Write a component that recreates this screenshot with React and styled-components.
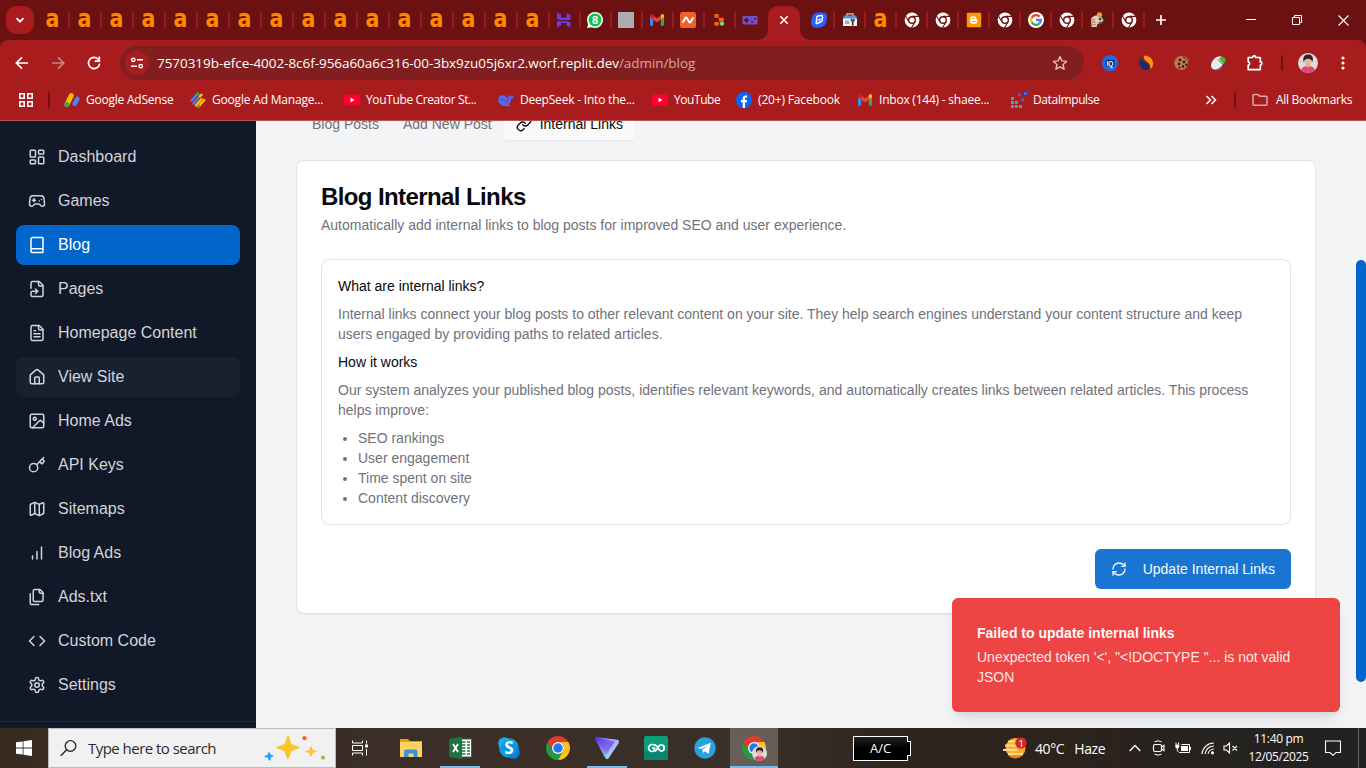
import React from "react";
import styled, { createGlobalStyle, css } from "styled-components";
import { Gamepad2, Book, House, Image as ImageIcon, Key, Map as MapIcon, Code, Link, RefreshCw } from "lucide-react";

const GlobalStyle = createGlobalStyle`
  *, *::before, *::after { box-sizing: border-box; }
  body { margin: 0; overflow: hidden; font-family: "Liberation Sans", Arial, sans-serif; }
  h1, h2, p, ul { margin: 0; }
  svg { display: block; flex: none; }
`;

const color = {
  frame: "#6b1112",
  toolbar: "#a81c1e",
  omnibox: "#821e1f",
  blue: "#0066cc",
  muted: "#71717a",
};
const uiFont = `"Open Sans", "Noto Sans", sans-serif`;

const Screen = styled.div`
  position: relative;
  width: 1366px;
  height: 768px;
  display: flex;
  flex-direction: column;
  overflow: hidden;
`;

/* ---------- browser frame ---------- */
const TabStrip = styled.div`
  height: 40px;
  flex: none;
  display: flex;
  align-items: center;
  background: ${color.frame};
  padding-left: 6px;
`;
const TabSearch = styled.div`
  width: 28px;
  height: 28px;
  margin-right: 4px;
  border-radius: 10px;
  background: ${color.toolbar};
  display: grid;
  place-items: center;
`;
const Tab = styled.div`
  flex: none;
  width: ${(p) => p.$w}px;
  height: 16px;
  padding-right: ${(p) => p.$pr || 0}px;
  border-right: 2px solid ${(p) => (p.$last ? "transparent" : "#9a1b1d")};
  display: flex;
  align-items: center;
  justify-content: center;
`;
const LetterA = styled.span`
  font: bold 25px/16px "DejaVu Sans Condensed", "DejaVu Sans", sans-serif;
  font-stretch: condensed;
  color: #ff8a00;
  transform: translateY(-1px) scaleX(0.92);
`;
const ActiveTab = styled.div`
  position: relative;
  flex: none;
  align-self: flex-end;
  width: 32px;
  height: 34px;
  margin: 0 4px 0 1px;
  border-radius: 10px 10px 0 0;
  background: ${color.toolbar};
  display: grid;
  place-items: center;
  padding-bottom: 6px;
  &::before, &::after {
    content: "";
    position: absolute;
    bottom: 0;
    width: 10px;
    height: 10px;
  }
  &::before { left: -10px; background: radial-gradient(circle at 0 0, transparent 9.5px, ${color.toolbar} 10px); }
  &::after { right: -10px; background: radial-gradient(circle at 100% 0, transparent 9.5px, ${color.toolbar} 10px); }
`;
const NewTab = styled.div`
  width: 32px;
  display: grid;
  place-items: center;
`;
const WindowControls = styled.div`
  margin-left: auto;
  display: flex;
`;
const WindowButton = styled.div`
  width: 46px;
  height: 40px;
  display: grid;
  place-items: center;
`;
const ToolbarArea = styled.div`
  flex: none;
  height: 81px;
  background: linear-gradient(${color.toolbar}, ${color.toolbar}) 0 8px / 100% 100% no-repeat, ${color.frame};
  border-bottom: 1px solid #bf5254;
`;
const ToolbarFill = styled.div`
  height: 80px;
  border-radius: 8px 8px 0 0;
  background: ${color.toolbar};
`;
const AddressRow = styled.div`
  height: 46px;
  display: flex;
  align-items: center;
  padding-left: 4px;
`;
const NavButton = styled.div`
  width: 36px;
  height: 34px;
  display: grid;
  place-items: center;
  opacity: ${(p) => (p.$off ? 0.45 : 1)};
`;
const Omnibox = styled.div`
  width: 964px;
  height: 34px;
  margin-left: 8px;
  padding: 0 16px 0 5px;
  border-radius: 17px;
  background: ${color.omnibox};
  display: flex;
  align-items: center;
`;
const SiteInfo = styled.div`
  width: 24px;
  height: 24px;
  border-radius: 50%;
  background: ${color.toolbar};
  display: grid;
  place-items: center;
  margin-right: 8px;
`;
const Url = styled.div`
  flex: 1;
  white-space: nowrap;
  font: 13.5px/20px ${uiFont};
  letter-spacing: -0.05px;
  color: #fff;
  span { color: #d8a5a5; }
`;
const ExtRow = styled.div`
  display: flex;
  align-items: center;
  margin-left: 8px;
`;
const Ext = styled.div`
  width: ${(p) => p.$w || 36}px;
  height: 32px;
  display: grid;
  place-items: center;
`;
const Divider = styled.div`
  width: 2px;
  height: 16px;
  border-radius: 1px;
  background: #6f1214;
  flex: none;
  margin: ${(p) => p.$m || "0"};
`;
const BookmarkRow = styled.div`
  height: 28px;
  display: flex;
  align-items: center;
  padding-left: 19px;
`;
const Bookmark = styled.div`
  flex: none;
  width: ${(p) => p.$w}px;
  display: flex;
  align-items: center;
  gap: ${(p) => p.$gap || 6}px;
  font: 12px/16px ${uiFont};
  letter-spacing: ${(p) => p.$ls || -0.3}px;
  white-space: nowrap;
  color: #fff;
`;
const Overflow = styled.div`
  margin-left: auto;
  margin-right: 17px;
`;

/* ---------- admin page ---------- */
const Viewport = styled.div`
  height: 607px;
  flex: none;
  display: flex;
  overflow: hidden;
  background: #f3f4f6;
`;
const Sidebar = styled.nav`
  width: 256px;
  flex: none;
  background: #111827;
  display: flex;
  flex-direction: column;
`;
const NavList = styled.div`
  display: flex;
  flex-direction: column;
  gap: 4px;
  padding: 16px;
  border-bottom: 1px solid #1f2937;
`;
const NavItem = styled.div`
  height: 40px;
  display: flex;
  align-items: center;
  gap: 12px;
  padding: 0 12px;
  border-radius: 8px;
  font-size: 16px;
  line-height: 24px;
  color: #d1d5db;
  ${(p) => p.$state === "active" && css`background: ${color.blue}; color: #fff;`}
  ${(p) => p.$state === "hover" && css`background: #18212f;`}
`;
const Main = styled.main`
  flex: 1;
  padding: 0 40px;
  display: flex;
  flex-direction: column;
`;
const TabList = styled.div`
  display: flex;
  align-self: flex-start;
  flex: none;
  height: 40px;
  margin-top: -17px;
  padding: 4px;
  border-radius: 6px;
  background: #f3f4f5;
`;
const TabTrigger = styled.div`
  display: flex;
  align-items: center;
  gap: 8px;
  padding: 0 12px;
  font-size: 14px;
  line-height: 20px;
  white-space: nowrap;
  border-radius: 4px;
  color: ${color.muted};
  ${(p) => p.$active && css`
    color: #0c0a09;
    background: #fafafa;
    box-shadow: 0 1px 2px rgba(0, 0, 0, 0.06);
  `}
`;
const Card = styled.section`
  flex: none;
  margin-top: 16px;
  height: 454px;
  padding: 24px;
  border: 1px solid #e4e4e7;
  border-radius: 8px;
  background: #fff;
  box-shadow: 0 1px 2px rgba(0, 0, 0, 0.05);
  display: flex;
  flex-direction: column;
`;
const Title = styled.h1`
  font-size: 24px;
  line-height: 24px;
  font-weight: bold;
  letter-spacing: -0.6px;
  color: #09090b;
`;
const Subtitle = styled.p`
  margin-top: 6px;
  font-size: 14px;
  line-height: 20px;
  color: ${color.muted};
`;
const InfoBox = styled.div`
  margin-top: 24px;
  padding: 16px;
  border: 1px solid #e4e4e7;
  border-radius: 8px;
  display: flex;
  flex-direction: column;
  gap: 8px;
  font-size: 14px;
  line-height: 20px;
  color: ${color.muted};
`;
const InfoHeading = styled.h2`
  font-size: 14px;
  line-height: 20px;
  font-weight: 400;
  color: #09090b;
`;
const Bullets = styled.ul`
  padding-left: 20px;
`;
const UpdateButton = styled.div`
  align-self: flex-end;
  flex: none;
  margin-top: 24px;
  width: 196px;
  height: 40px;
  padding: 0 16px;
  display: flex;
  align-items: center;
  justify-content: space-between;
  border-radius: 6px;
  background: #1a75d2;
  color: #f8fafc;
  font-size: 14px;
  white-space: nowrap;
`;
const ScrollGutter = styled.div`
  width: 10px;
  flex: none;
  padding-top: 139px;
`;
const ScrollThumb = styled.div`
  height: 422px;
  border-radius: 5px;
  background: ${color.blue};
`;
const Toast = styled.div`
  position: absolute;
  right: 26px;
  top: 598px;
  width: 388px;
  height: 114px;
  padding: 25px;
  border-radius: 6px;
  background: #ef4444;
  color: #fafafa;
  font-size: 14px;
  line-height: 20px;
  box-shadow: 0 10px 15px -3px rgba(0, 0, 0, 0.1), 0 4px 6px -4px rgba(0, 0, 0, 0.1);
`;
const ToastTitle = styled.div`
  font-weight: bold;
  margin-bottom: 4px;
`;
const ToastText = styled.div`
  opacity: 0.9;
`;

/* ---------- taskbar ---------- */
const Taskbar = styled.footer`
  position: relative;
  height: 40px;
  flex: none;
  display: flex;
  align-items: center;
  background: linear-gradient(90deg, #382b22 0, #3a2e26 30%, #3b3028 55%, #30251e 66%, #2c231d 78%, #242220 92%, #232221 100%);
  font-family: ${uiFont};
  color: #fff;
`;
const TaskCell = styled.div`
  position: relative;
  flex: none;
  width: 48px;
  height: 40px;
  display: grid;
  place-items: center;
  margin-right: ${(p) => p.$mr || 0}px;
  background: ${(p) => (p.$active ? "#675e58" : "transparent")};
  &::after {
    content: "";
    display: ${(p) => (p.$open ? "block" : "none")};
    position: absolute;
    bottom: 0;
    left: ${(p) => (p.$active ? 0 : 4)}px;
    right: ${(p) => (p.$active ? 0 : 4)}px;
    height: 2px;
    background: #76b9ed;
  }
`;
const SearchBox = styled.div`
  width: 288px;
  height: 40px;
  flex: none;
  border: 1px solid #bdbbb9;
  background: #f2f1f1;
  display: flex;
  align-items: center;
  padding: 0 9px 0 11px;
  font-size: 15px;
  color: #2b2b2b;
  span { flex: 1; margin-left: 11px; letter-spacing: -0.53px; white-space: nowrap; }
`;
const BatteryBadge = styled.div`
  position: relative;
  width: 55px;
  height: 25px;
  margin-left: 75px;
  border: 1px solid #fff;
  background: linear-gradient(#222, #000 50%);
  font: 13px/23px ${uiFont};
  text-align: center;
  &::after {
    content: "";
    position: absolute;
    right: -4px;
    top: 4px;
    width: 4px;
    height: 15px;
    border: 1px solid #fff;
    border-left: 0;
    background: #000;
  }
`;
const Tray = styled.div`
  margin-left: auto;
  display: flex;
  align-items: center;
`;
const Weather = styled.div`
  width: 120px;
  display: flex;
  align-items: center;
  font-size: 14px;
  letter-spacing: -0.4px;
  white-space: nowrap;
`;
const WeatherText = styled.span`
  margin-left: ${(p) => p.$ml}px;
`;
const TrayCell = styled.div`
  width: ${(p) => p.$w}px;
  height: 40px;
  display: grid;
  place-items: center;
`;
const Clock = styled.div`
  width: 71px;
  text-align: center;
  font-size: 12px;
  line-height: 18px;
  letter-spacing: -0.35px;
  white-space: nowrap;
`;
const ShowDesktop = styled.div`
  width: 8px;
  height: 40px;
  margin-left: 6px;
  border-left: 1px solid #6a6866;
`;

/* ---------- drawings ---------- */
const Svg = ({ s = 16, vb = "0 0 16 16", w, h, children, ...rest }) => (
  <svg width={w || s} height={h || s} viewBox={vb} fill="none" {...rest}>{children}</svg>
);
const Line = ({ s = 18, children }) => (
  <Svg s={s} vb="0 0 24 24" stroke="currentColor" strokeWidth="2" strokeLinecap="round" strokeLinejoin="round">{children}</Svg>
);
const DashboardIcon = () => (
  <Line><rect x="3" y="3" width="7" height="9" rx="1" /><rect x="14" y="3" width="7" height="5" rx="1" /><rect x="14" y="12" width="7" height="9" rx="1" /><rect x="3" y="16" width="7" height="5" rx="1" /></Line>
);
const FileArrow = () => (
  <Line><path d="m10 18 3-3-3-3" /><path d="M14 2v4a2 2 0 0 0 2 2h4" /><path d="M4 11V4a2 2 0 0 1 2-2h9l5 5v13a2 2 0 0 1-2 2H6a2 2 0 0 1-2-2v-3a2 2 0 0 1 2-2h7" /></Line>
);
const FileText = () => (
  <Line><path d="M15 2H6a2 2 0 0 0-2 2v16a2 2 0 0 0 2 2h12a2 2 0 0 0 2-2V7Z" /><path d="M14 2v4a2 2 0 0 0 2 2h4M10 9H8M16 13H8M16 17H8" /></Line>
);
const Bars = () => (<Line><path d="M12 20V10M18 20V4M6 20v-4" /></Line>);
const FilesIcon = () => (
  <Line><path d="M20 7h-3a2 2 0 0 1-2-2V2" /><path d="M9 18a2 2 0 0 1-2-2V4a2 2 0 0 1 2-2h7l4 4v10a2 2 0 0 1-2 2Z" /><path d="M3 7.6v12.8A1.6 1.6 0 0 0 4.6 22h9.8" /></Line>
);
const Gear = () => (
  <Line><path d="M12.22 2h-.44a2 2 0 0 0-2 2v.18a2 2 0 0 1-1 1.73l-.43.25a2 2 0 0 1-2 0l-.15-.08a2 2 0 0 0-2.73.73l-.22.38a2 2 0 0 0 .73 2.73l.15.1a2 2 0 0 1 1 1.72v.51a2 2 0 0 1-1 1.74l-.15.09a2 2 0 0 0-.73 2.73l.22.38a2 2 0 0 0 2.73.73l.15-.08a2 2 0 0 1 2 0l.43.25a2 2 0 0 1 1 1.73V20a2 2 0 0 0 2 2h.44a2 2 0 0 0 2-2v-.18a2 2 0 0 1 1-1.73l.43-.25a2 2 0 0 1 2 0l.15.08a2 2 0 0 0 2.73-.73l.22-.39a2 2 0 0 0-.73-2.73l-.15-.08a2 2 0 0 1-1-1.74v-.5a2 2 0 0 1 1-1.74l.15-.09a2 2 0 0 0 .73-2.73l-.22-.38a2 2 0 0 0-2.73-.73l-.15.08a2 2 0 0 1-2 0l-.43-.25a2 2 0 0 1-1-1.73V4a2 2 0 0 0-2-2z" /><circle cx="12" cy="12" r="3" /></Line>
);

const Hostinger = () => (
  <Svg><path d="M1 .5 5 2.400V5.600h5.500V1l4 2v5H3.800L1 6.800zM1 15.500V9.200l11 .1 2.500 1.300v4.900l-4-2v-2.400H5v2.400z" fill="#673de6" /></Svg>
);
const WhatsApp = () => (
  <Svg><circle cx="8" cy="8" r="8" fill="#fff" /><path d="M0 16 1.500 11 6 15z" fill="#fff" /><circle cx="8" cy="7.900" r="6.500" fill="#12c04c" /><text x="8" y="11.700" textAnchor="middle" fontFamily="Liberation Sans, sans-serif" fontWeight="bold" fontSize="11" fill="#fff">8</text></Svg>
);
const GraySquare = () => (<Svg><rect width="16" height="16" fill="#adadad" /></Svg>);
const Gmail = () => (
  <Svg><path d="M1 4v8.800c0 .6.400 1 1 1h2.200V6.900z" fill="#4285f4" /><path d="M11.800 6.900v6.900H14c.6 0 1-.4 1-1V4z" fill="#34a853" /><path d="M11.800 3.600v4L15 5.200V3.800c0-1.500-1.700-2.200-2.700-1.400z" fill="#fbbc04" /><path d="M4.200 7.600v-4L8 6.400l3.800-2.800v4L8 10.500z" fill="#ea4335" /><path d="M1 3.800v1.400l3.200 2.400v-4l-.5-1.200C2.700 1.600 1 2.300 1 3.800z" fill="#c5221f" /></Svg>
);
const Namecheap = () => (
  <Svg><rect width="16" height="16" rx="2.500" fill="#f0622a" /><path d="M3 10 5.200 6.200Q6 5 6.900 6.200L9.100 9.800Q10 11 10.800 9.800L13 6" stroke="#fff" strokeWidth="2" strokeLinecap="round" /></Svg>
);
const Replit = () => (
  <Svg><path d="M3.300 2h4.500v3.800H3.300zM7.800 5.800h5v3.600h-5zM3.300 10h4.500v3.700H3.300z" fill="#f26207" /><circle cx="11" cy="11.600" r="2.200" fill="#6fdc8c" /></Svg>
);
const PadIcon = () => (
  <Svg><rect x="0.500" y="4" width="15" height="8.500" rx="1" fill="#7c4bc4" /><path d="M4.500 5.700v5M2 8.200h5M9.300 9.700h1.800M12 6.800h1.800" stroke="#2e1440" strokeWidth="1.500" /></Svg>
);
const BlueLogo = () => (
  <Svg><path d="M4.500.9Q10-.5 13.800.8 16.300 1.500 16 5.500 15.700 10.500 13.800 13.300 10.500 16.300 5 15.800 1 15.600.3 12.500-.5 7 1.700 3.500 2.800 1.400 4.500.9z" fill="#2860ff" /><path d="M6 4.800q.2-.7 1-.8l3.600-.4q1-.1.900.9l-.5 4.200q-.1.800-.9 1l-4 1.800q-1 .4-1-.7z" stroke="#fff" strokeWidth="1.500" /><path d="m7.500 6.900 2.300-.4-.4 2-2.200.7z" fill="#fff" /></Svg>
);
const Toolbox = () => (
  <Svg><path d="M5 4V1.800h6V4" stroke="#c9ccd0" strokeWidth="1.200" /><rect x="1.500" y="3.500" width="13" height="4" rx="1" fill="#5b93d6" /><rect x="1" y="6.500" width="14" height="7.500" fill="#f2f3f4" /><rect x="3" y="8.500" width="4.500" height="3.500" fill="#a9b0b8" /><path d="M10.700 9v4.500M9 7l1.700 2.500L12.500 7" stroke="#30343a" strokeWidth="1.700" /></Svg>
);
const ChromeMono = () => (
  <Svg><circle cx="8" cy="8" r="7.400" fill="#fff" /><circle cx="8" cy="8" r="4" fill={color.frame} /><circle cx="8" cy="8" r="2.600" fill="#fff" /><path d="M8 4.400h7M4.900 9.800 1.300 3.700M11.100 9.800 7.500 15.800" stroke={color.frame} strokeWidth="1.100" /></Svg>
);
const Blogger = () => (
  <Svg><rect x=".8" y=".8" width="14.400" height="14.400" rx="1" fill="#ff9800" /><path d="M6.200 4.200h2a2 2 0 0 1 2 2v.4c0 .5.300.8.700.8.400 0 .6.300.6.600v1.700a2 2 0 0 1-2 2H6.200a2 2 0 0 1-2-2V6.200a2 2 0 0 1 2-2z" fill="#fff" /><path d="M6.300 6.500h1.800M6.300 9.500h3" stroke="#ff9800" strokeWidth="1.100" strokeLinecap="round" /></Svg>
);
const GoogleG = () => (
  <Svg><circle cx="8" cy="8" r="8" fill="#fff" /><g strokeWidth="2.300"><path d="M11.600 4.600A4.900 4.900 0 0 0 3.700 5.700" stroke="#ea4335" /><path d="M3.700 5.700a4.900 4.900 0 0 0 0 4.600" stroke="#fbbc05" /><path d="M3.700 10.300a4.900 4.900 0 0 0 7.700 1.200" stroke="#34a853" /><path d="M8 8h4.900a4.900 4.900 0 0 1-1.500 3.500" stroke="#4285f4" /></g></Svg>
);
const Critter = () => (
  <Svg><path d="M1 7C3 2.500 9 2.500 12.500 4.500l2.500 3-4 3.500-3.500 1-1 3H1.500z" fill="#d8d3cc" /><path d="M1.500 7.500h3.500M1.500 10h4M2 12.500h4" stroke="#d8912b" strokeWidth="1.400" /><circle cx="9.500" cy="2.800" r="2.600" fill="#f59a35" /><path d="M11 4.500c3-1.500 5.500.5 4 4.500l-1.500.5-.5-2.500z" fill="#23272b" /><circle cx="10" cy="7" r="1.300" fill="#3d2c28" /><path d="m8.500 11 3-1.500" stroke="#6b4a3a" strokeWidth="1.200" /><circle cx="12.600" cy="7.800" r="1" fill="#7ba65a" /></Svg>
);

const AdSense = () => (
  <Svg><path d="M3 12.500 7.300 3.500" stroke="#fbbc04" strokeWidth="5" strokeLinecap="round" /><path d="M10.800 11.800 13.300 7" stroke="#4285f4" strokeWidth="4.600" strokeLinecap="round" /><circle cx="2.800" cy="12.500" r="2.500" fill="#34a853" /></Svg>
);
const AdManager = () => (
  <Svg><g strokeWidth="2.500" strokeLinecap="round"><path d="M1.700 8.500 7.500 2" stroke="#4285f4" /><path d="M3.500 11.500 8 6.500" stroke="#4285f4" /><path d="m6 13.500 5.500-6.500" stroke="#fbbc04" /><path d="m8.500 14.500 5.700-6.300" stroke="#fbbc04" /><path d="M9.500 4.500 11.500 2.800" stroke="#fbbc04" /><path d="m7.500 2 .5-.5M8.300 14.600l.5-.5" stroke="#34a853" /></g></Svg>
);
const YouTube = () => (
  <Svg><rect y="2.500" width="16" height="11" rx="2.500" fill="#ff0033" /><path d="M6.500 5.700v4.600L10.500 8z" fill="#fff" /></Svg>
);
const DeepSeek = () => (
  <Svg><path d="M.2 7.500C.5 3.500 4.500 2.300 7 4c1.500 1 3 2.700 3.700 2.500-.8-1.300-.6-2.900.2-3.900.4 1.400 1.400 2 2.300 1.800.9-.1 1.500-.7 2.600-.9-.2 2.200-1.500 3.700-3 4 0 2.200-1 4-2.200 5l2 1.400c-1.500.7-3.200.6-4.200 0-4 .7-8.100-1.800-8.200-6.400z" fill="#4d6bfe" /><path d="M3.200 7.300c2-.5 4.700 2.200 6.300 4.500M8.700 7.600c.9.100 1.500.7 1.700 1.400" stroke={color.toolbar} strokeWidth=".9" /></Svg>
);
const Facebook = () => (
  <Svg><circle cx="8" cy="8" r="8" fill="#0866ff" /><path d="M6.700 15.800V10.300H5V8h1.700V6.700c0-2.300 1.100-3.300 3.100-3.300.6 0 1 .1 1.300.2v2c-2-.3-2 .3-2 1.500V8h2l-.4 2.300H9.100v5.600z" fill="#fff" /></Svg>
);
const DataImpulse = () => (
  <Svg><g fill="#35a9c4"><path d="M0 5h3v3H0zM0 9h3v3H0zM4 9h3v3H4zM0 13h3v3H0zM4 13h3v3H4zM8 13h3v3H8z" /></g><g fill="#4a63e0"><path d="m8.500 1 2 2-2 2-2-2zM11.500 6l2 2-2 2-2-2z" /><path d="M13 0h3v3h-3z" /></g></Svg>
);

const ChromeColor = ({ s = 24 }) => (
  <Svg s={s} vb="0 0 48 48"><path d="M24 12h20.780A24 24 0 0 0 3.220 12L13.610 30A12 12 0 0 1 24 12z" fill="#e33b2e" /><path d="M34.390 30 24 48A24 24 0 0 1 3.220 12L13.610 30A12 12 0 0 0 34.390 30z" fill="#249a41" /><path d="M24 48A24 24 0 0 0 44.780 12H24A12 12 0 0 1 34.390 30z" fill="#fcc31e" /><circle cx="24" cy="24" r="12" fill="#fff" /><circle cx="24" cy="24" r="9.500" fill="#2a78ea" /></Svg>
);
const Portrait = ({ s = 20 }) => (
  <Svg s={s} vb="0 0 20 20"><circle cx="10" cy="10" r="10" fill="#dedbd8" /><path d="M3.200 17.300C3.800 14 7 13 10 13s6.200 1 6.800 4.300A10 10 0 0 1 3.200 17.300z" fill="#e0457b" /><path d="M8 10h4v3.500l-2 1.200-2-1.200z" fill="#d9a58d" /><ellipse cx="10" cy="8.300" rx="3.500" ry="4.300" fill="#e6b8a2" /><path d="M5.800 9.500C4.300 4 6.500 1.500 10.200 1.500s5.900 2.500 4 8C13.800 7 12.800 5.800 10 5.800S6.300 7 5.800 9.500z" fill="#33211d" /></Svg>
);

const tabsLeft = [Hostinger, WhatsApp, GraySquare, Gmail, Namecheap, Replit, PadIcon];
const Letter = () => <LetterA>a</LetterA>;
const tabsRight = [BlueLogo, Toolbox, Letter, ChromeMono, ChromeMono, Blogger, ChromeMono, GoogleG, ChromeMono, Critter, ChromeMono];

const bookmarks = [
  { icon: AdSense, label: "Google AdSense", w: 126, ls: -0.23 },
  { icon: AdManager, label: "Google Ad Manage...", w: 154, ls: -0.19 },
  { icon: YouTube, label: "YouTube Creator St...", w: 154, ls: -0.37 },
  { icon: DeepSeek, label: "DeepSeek - Into the...", w: 154, ls: -0.2 },
  { icon: YouTube, label: "YouTube", w: 84, ls: -0.44 },
  { icon: Facebook, label: "(20+) Facebook", w: 121, ls: -0.16 },
  { icon: Gmail, label: "Inbox (144) - shaee...", w: 154, ls: -0.22 },
  { icon: DataImpulse, label: "DataImpulse", w: 100, ls: -0.42 },
];

const navItems = [
  [DashboardIcon, "Dashboard"],
  [Gamepad2, "Games"],
  [Book, "Blog", "active"],
  [FileArrow, "Pages"],
  [FileText, "Homepage Content"],
  [House, "View Site", "hover"],
  [ImageIcon, "Home Ads"],
  [Key, "API Keys"],
  [MapIcon, "Sitemaps"],
  [Bars, "Blog Ads"],
  [FilesIcon, "Ads.txt"],
  [Code, "Custom Code"],
  [Gear, "Settings"],
];

function BrowserFrame() {
  return (
    <>
      <TabStrip>
        <TabSearch><Svg s={10} vb="0 0 10 10"><path d="m1.500 3.200 3.500 3.500 3.500-3.500" stroke="#fff" strokeWidth="1.800" /></Svg></TabSearch>
        {Array.from({ length: 16 }, (_, i) => <Tab key={i} $w={32}><LetterA>a</LetterA></Tab>)}
        {tabsLeft.map((Icon, i) => <Tab key={i} $w={31} $pr={1} $last={i === 6}><Icon /></Tab>)}
        <ActiveTab><Svg s={10} vb="0 0 10 10"><path d="m1.300 1.300 7.400 7.400M8.700 1.300 1.300 8.700" stroke="#fff" strokeWidth="1.600" /></Svg></ActiveTab>
        {tabsRight.map((Icon, i) => <Tab key={i} $w={31}><Icon /></Tab>)}
        <NewTab><Svg s={12} vb="0 0 12 12"><path d="M6 1v10M1 6h10" stroke="#fff" strokeWidth="1.700" /></Svg></NewTab>
        <WindowControls>
          <WindowButton><Svg s={10} vb="0 0 10 10"><path d="M0 4.500h10" stroke="#fff" /></Svg></WindowButton>
          <WindowButton><Svg s={10} vb="0 0 10 10"><path d="M.5 2.500h7v7h-7zM2.500 2.500v-2h7v7h-2" stroke="#fff" /></Svg></WindowButton>
          <WindowButton><Svg s={11} vb="0 0 11 11"><path d="m.5.5 10 10M10.500.5l-10 10" stroke="#fff" strokeWidth="1.100" /></Svg></WindowButton>
        </WindowControls>
      </TabStrip>
      <ToolbarArea>
        <ToolbarFill>
          <AddressRow>
            <NavButton><Svg><path d="M14 8H2.500M8 2.300 2.300 8 8 13.700" stroke="#fff" strokeWidth="1.700" /></Svg></NavButton>
            <NavButton $off><Svg><path d="M2 8h11.500M8 2.300 13.700 8 8 13.700" stroke="#fff" strokeWidth="1.700" /></Svg></NavButton>
            <NavButton><Svg><path d="M12.600 4.700A5.600 5.600 0 1 0 13.600 8.600" stroke="#fff" strokeWidth="1.700" /><path d="M13.300 1.500v4.600H8.700" stroke="#fff" strokeWidth="1.700" /></Svg></NavButton>
            <Omnibox>
              <SiteInfo><Svg s={14} vb="0 0 14 14" stroke="#fff" strokeWidth="1.400"><circle cx="3.300" cy="3.800" r="1.700" /><path d="M7 3.800h6M1 10.200h6" /><circle cx="10.700" cy="10.200" r="1.700" /></Svg></SiteInfo>
              <Url>7570319b-efce-4002-8c6f-956a60a6c316-00-3bx9zu05j6xr2.worf.replit.dev<span>/admin/blog</span></Url>
              <Svg><path d="m8 1.600 1.900 4.300 4.700.5-3.500 3.100 1 4.700L8 11.800l-4.100 2.400 1-4.700L1.400 6.400l4.700-.5z" stroke="#e3bcbc" strokeWidth="1.400" strokeLinejoin="round" /></Svg>
            </Omnibox>
            <ExtRow>
              <Ext><Svg><circle cx="8" cy="8" r="8" fill="#1a6cf2" /><rect x="3.500" y="4.700" width="9" height="6.800" rx="1" fill="#0a2a6a" /><text x="8" y="10.500" textAnchor="middle" fontFamily="Liberation Sans, sans-serif" fontWeight="bold" fontSize="6.500" fill="#fff">IQ</text></Svg></Ext>
              <Ext><Svg><path d="M4.500 1.500C1 4 .2 9 3 12.500s7 3 8.500 1C12 10 9.500 8.500 7 7S4 3.500 4.500 1.500z" fill="#1f2f66" /><path d="M6 .8c4-.5 8 2 8.800 5.500s-.3 6.700-2.500 8c.6-4-1-6-3.300-7.500S5.300 3 6 .8z" fill="#ff9416" /></Svg></Ext>
              <Ext><Svg><path d="M8.500 1a2 2 0 0 0 1.800 2.500A2.500 2.500 0 0 0 13 5.500a7 7 0 1 1-4.500-4.500z" fill="#b9794c" transform="translate(.8 .3)" /><path d="M10 .8c3 .5 5 3 5.300 5.700L12 5z" fill="#9b6039" /><g fill="#2b1a14"><circle cx="6" cy="5" r="1.300" /><circle cx="10" cy="7" r="1.300" /><circle cx="5" cy="9" r="1.300" /><circle cx="9" cy="11.500" r="1.300" /><circle cx="12.500" cy="9.800" r="1.200" /><circle cx="5.500" cy="12.700" r="1" /></g></Svg></Ext>
              <Ext><Svg><ellipse cx="7.500" cy="8" rx="5.400" ry="7.600" transform="rotate(42 7.500 8)" fill="#e8ecee" /><path d="M3 14.500c4 .5 9-2 11-8l-2.500 6.500L7 15.500z" fill="#6f7d86" /><path d="M9 3.500C11 1 14 1 15 3.500s.2 4-1.500 5.500z" fill="#44b82e" /><path d="m8 4.500 5 5" stroke="#333" strokeWidth=".8" /></Svg></Ext>
              <Ext $w={38}><Svg s={18} vb="0 0 18 18"><path d="M2.200 3.500h4.300a1.600 1.600 0 0 1 3.200 0h4.600v4.400a1.600 1.600 0 0 1 0 3.200v4.500H2.200v-4.200a2 2 0 0 0 0-3.800z" stroke="#fff" strokeWidth="1.700" strokeLinejoin="round" /></Svg></Ext>
              <Divider $m="0 0 0 7px" />
              <Ext $w={50}><Portrait /></Ext>
              <Ext $w={20}><Svg s={16}><g fill="#fff"><circle cx="8" cy="3" r="1.600" /><circle cx="8" cy="8" r="1.600" /><circle cx="8" cy="13" r="1.600" /></g></Svg></Ext>
            </ExtRow>
          </AddressRow>
          <BookmarkRow>
            <Svg s={14} vb="0 0 14 14" stroke="#fff" strokeWidth="1.600"><path d="M.8.800h4.400v4.400H.8zM8.800.8h4.400v4.400H8.800zM.8 8.800h4.400v4.400H.8zM8.800 8.800h4.400v4.400H8.800z" /></Svg>
            <Divider $m="0 14px 0 15px" />
            {bookmarks.map(({ icon: Icon, label, w, ls }) => (
              <Bookmark key={label} $w={w} $ls={ls}><Icon />{label}</Bookmark>
            ))}
            <Overflow><Svg s={12} vb="0 0 12 12"><path d="m1.500 2 4 4-4 4M6.500 2l4 4-4 4" stroke="#fff" strokeWidth="1.500" /></Svg></Overflow>
            <Divider $m="0 16px 0 0" />
            <Bookmark $w={114} $gap={8}>
              <Svg><path d="M1 3.500c0-.5.400-1 1-1h4l1.700 1.800H14c.6 0 1 .4 1 1v7c0 .6-.4 1-1 1H2c-.6 0-1-.4-1-1z" stroke="#d8a9a9" strokeWidth="1.500" /></Svg>
              All Bookmarks
            </Bookmark>
          </BookmarkRow>
        </ToolbarFill>
      </ToolbarArea>
    </>
  );
}

function AdminPage() {
  return (
    <Viewport>
      <Sidebar>
        <NavList>
          {navItems.map(([Icon, label, state]) => (
            <NavItem key={label} $state={state}><Icon size={18} /><span>{label}</span></NavItem>
          ))}
        </NavList>
      </Sidebar>
      <Main>
        <TabList>
          <TabTrigger>Blog Posts</TabTrigger>
          <TabTrigger>Add New Post</TabTrigger>
          <TabTrigger $active><Link size={16} />Internal Links</TabTrigger>
        </TabList>
        <Card>
          <Title>Blog Internal Links</Title>
          <Subtitle>Automatically add internal links to blog posts for improved SEO and user experience.</Subtitle>
          <InfoBox>
            <InfoHeading>What are internal links?</InfoHeading>
            <p>Internal links connect your blog posts to other relevant content on your site. They help search engines understand your content structure and keep users engaged by providing paths to related articles.</p>
            <InfoHeading>How it works</InfoHeading>
            <p>Our system analyzes your published blog posts, identifies relevant keywords, and automatically creates links between related articles. This process helps improve:</p>
            <Bullets>
              <li>SEO rankings</li>
              <li>User engagement</li>
              <li>Time spent on site</li>
              <li>Content discovery</li>
            </Bullets>
          </InfoBox>
          <UpdateButton><RefreshCw size={16} />Update Internal Links</UpdateButton>
        </Card>
      </Main>
      <ScrollGutter><ScrollThumb /></ScrollGutter>
    </Viewport>
  );
}

function WindowsTaskbar() {
  return (
    <Taskbar>
      <TaskCell><Svg><path d="M0 2.300 6.700 1.400v6.200H0zM7.500 1.200 16 0v7.600H7.500zM0 8.400h6.700v6.200L0 13.700zM7.500 8.400H16V16l-8.500-1.200z" fill="#fff" /></Svg></TaskCell>
      <SearchBox>
        <Svg s={17} vb="0 0 17 17"><circle cx="10.500" cy="6" r="5.300" stroke="#222" strokeWidth="1.300" /><path d="M6.700 9.800.7 15.800" stroke="#222" strokeWidth="1.400" /></Svg>
        <span>Type here to search</span>
        <Svg w={62} h={26} vb="0 0 62 26">
          <path d="M24 .8c1.700 0 2 6.500 3.700 8.200S35.500 10.900 35.500 12.500s-6 2-7.800 3.700S25.700 24.300 24 24.300s-2-6.400-3.700-8.100-8-2.100-8-3.700 6.300-1.800 8-3.500S22.300.8 24 .8z" fill="#fcc42c" />
          <path d="M47 11c.8 0 1 3 1.800 3.800s4 .9 4 1.700-3.200 1-4 1.800S47.800 22 47 22s-1-2.900-1.800-3.700-4-1-4-1.800 3.200-.9 4-1.700S46.200 11 47 11z" fill="#fdc13c" />
          <path d="M5 17c.7 0 1 2 1.500 2.500s3 .3 3 1.300-2.500 1-2.700 1.700.4 3-1 3S4.300 23.200 3.700 22.700.5 22.800.5 21.500s2.300-1 2.800-1.500S4.300 17 5 17z" fill="#1ba5ef" />
          <circle cx="40.500" cy="3.200" r="2.100" fill="#ec6135" /><circle cx="59" cy="22.600" r="2.100" fill="#8cc63f" />
        </Svg>
      </SearchBox>
      <TaskCell $mr={3}><Svg><path d="M.5.500V3h10V.500M.5 15.500V13h10v2.500M.5 5.500h10v5H.5zM14.500.500v3M14.500 9v6.500" stroke="#fff" /><rect x="13" y="4.500" width="3" height="3" fill="#fff" /></Svg></TaskCell>
      <TaskCell $mr={1}><Svg s={24} vb="0 0 24 24"><path d="M1 3h8l2 2h12v4H1z" fill="#e3a008" /><path d="M1 6h22v15H1z" fill="#fdd45f" /><path d="M5 21v-5.500a2 2 0 0 1 2-2h9.500a2 2 0 0 1 2 2V21h-4v-3.500h-5V21z" fill="#3d92d8" /></Svg></TaskCell>
      <TaskCell $mr={1} $open><Svg s={24} vb="0 0 24 24"><rect x="11" y="3" width="12.500" height="18" fill="#fff" stroke="#1f7244" /><path d="M14 6h3.500M19 6h3M14 9h3.500M19 9h3M14 12h3.500M19 12h3M14 15h3.500M19 15h3M14 18h3.500M19 18h3" stroke="#1f7244" strokeWidth="1.600" /><path d="M1 3 14 .8v22.400L1 21z" fill="#1f7244" /><path d="m5 8 5 8M10 8l-5 8" stroke="#fff" strokeWidth="1.900" /></Svg></TaskCell>
      <TaskCell $mr={1}><Svg s={24} vb="0 0 24 24"><circle cx="12" cy="12" r="9.800" fill="#0a9fe8" /><circle cx="7.500" cy="7.500" r="6.300" fill="#15aef2" /><circle cx="16.500" cy="16.500" r="6.300" fill="#0b7fd4" /><circle cx="12" cy="12" r="8" fill="#0b97e3" /><text x="12" y="18" textAnchor="middle" fontFamily="Open Sans, sans-serif" fontWeight="bold" fontSize="17" fill="#fff">S</text></Svg></TaskCell>
      <TaskCell $mr={1}><ChromeColor /></TaskCell>
      <TaskCell $mr={1} $open>
        <Svg s={24} vb="0 0 24 24">
          <defs><linearGradient id="vpn" x1="4" y1="2" x2="14" y2="23" gradientUnits="userSpaceOnUse"><stop stopColor="#5a35f0" /><stop offset=".5" stopColor="#8f7df2" /><stop offset="1" stopColor="#6ff0d8" /></linearGradient></defs>
          <path d="M1.500 1 22 3.800c2 .3 2.500 2 1.500 3.500L13.700 22c-1 1.500-2.600 1.500-3.500 0L.3 3.500C-.3 2.200.3 1 1.500 1z" fill="url(#vpn)" /><path d="m3 1.500 17 4-9.500 15 2.700 2 10.500-15.500C24.500 5.500 23.500 4 22 3.800z" fill="#b6c7fa" opacity=".75" /><path d="m4 5 14.500 1.800L11 18z" fill="#6a4fe0" opacity=".45" />
        </Svg>
      </TaskCell>
      <TaskCell $mr={1}><Svg s={24} vb="0 0 24 24"><rect width="24" height="24" rx="2" fill="#08a07c" /><rect y="15" width="24" height="9" rx="2" fill="#07876c" /><path d="M10.500 9.500A3.500 3.500 0 1 0 10.500 14.500V12H8M11 15.500c2.500-1.500 3-6.700 6-6.700a3.200 3.200 0 0 1 0 6.400c-2.500 0-3-6.400-6.500-6.400" stroke="#fff" strokeWidth="1.700" /></Svg></TaskCell>
      <TaskCell $mr={1}><Svg s={24} vb="0 0 24 24"><circle cx="12" cy="12" r="10.700" fill="#2aa1de" /><path d="m4.500 12 13.300-5.300-2.200 11.200-3.700-2.700-2 2-.4-3.500 5.700-5L8.500 13z" fill="#fff" /></Svg></TaskCell>
      <TaskCell $open $active>
        <Svg s={26} vb="0 0 26 26"><g transform="translate(1 1)"><ChromeColor s={24} /></g><g transform="translate(11 11)"><Portrait s={15} /></g></Svg>
      </TaskCell>
      <BatteryBadge>A/C</BatteryBadge>
      <Tray>
        <Weather>
          <Svg w={25} h={22} vb="0 0 25 22"><circle cx="12.500" cy="11" r="10" fill="#fbb01e" /><path d="M5 4.500h10M2 8.500h17M0 13h14M5 17h15" stroke="#f4d9a4" strokeWidth="2" /><path d="M5 18h15a10 10 0 0 1-15 0z" fill="#f58220" /><circle cx="18" cy="6" r="5.800" fill="#cf2a25" /><text x="18" y="9.500" textAnchor="middle" fontFamily="Open Sans, sans-serif" fontSize="9.500" fill="#fff">1</text></Svg>
          <WeatherText $ml={7}>40°C</WeatherText><WeatherText $ml={10}>Haze</WeatherText>
        </Weather>
        <TrayCell $w={24}><Svg s={12} vb="0 0 12 12"><path d="m.7 9 5.300-5.500L11.300 9" stroke="#fff" strokeWidth="1.300" /></Svg></TrayCell>
        <TrayCell $w={23}><Svg><rect x="2.500" y="4.500" width="8" height="7" rx="1.500" stroke="#fff" strokeWidth="1.200" /><path d="m10.500 7 2.500-1.800v5.600L10.500 9" stroke="#fff" strokeWidth="1.100" /><path d="M3.500 1.800q3.500-2 7 0M3.500 14.200q3.500 2 7 0" stroke="#fff" /></Svg></TrayCell>
        <TrayCell $w={26}><Svg><path d="M4 12.500h10.500v-8H6.500" stroke="#fff" /><rect x="6" y="6" width="7" height="5" fill="#fff" /><path d="M15.500 7v3M1 2.500v2M3.500 2.500v2M2.300 8v2.500q0 1 1.200 1" stroke="#fff" /><path d="M.3 4.500h4v2q0 2-2 2t-2-2z" fill="#fff" /></Svg></TrayCell>
        <TrayCell $w={23}><Svg s={14} vb="0 0 14 14"><path d="M1 13A12 12 0 0 1 13 2M4 13a9 9 0 0 1 9-8M7 13a6 6 0 0 1 6-5" stroke="#fff" strokeWidth="1.100" /><circle cx="11.500" cy="11.800" r="1.600" fill="#fff" /></Svg></TrayCell>
        <TrayCell $w={24}><Svg><path d="M1 6h2.500L6.500 3v10L3.500 10H1zM9.500 6l4.500 4.500M14 6l-4.500 4.500" stroke="#fff" strokeWidth="1.100" /></Svg></TrayCell>
        <Clock>11:40 pm<br />12/05/2025</Clock>
        <TrayCell $w={38}><Svg s={16}><path d="M.5 1h15v11.500H11L8 15.300 5 12.500H.5z" stroke="#fff" strokeWidth="1.100" /></Svg></TrayCell>
        <ShowDesktop />
      </Tray>
    </Taskbar>
  );
}

export default function App() {
  return (
    <Screen>
      <GlobalStyle />
      <BrowserFrame />
      <AdminPage />
      <Toast>
        <ToastTitle>Failed to update internal links</ToastTitle>
        <ToastText>Unexpected token '&lt;', "&lt;!DOCTYPE "... is not valid JSON</ToastText>
      </Toast>
      <WindowsTaskbar />
    </Screen>
  );
}
